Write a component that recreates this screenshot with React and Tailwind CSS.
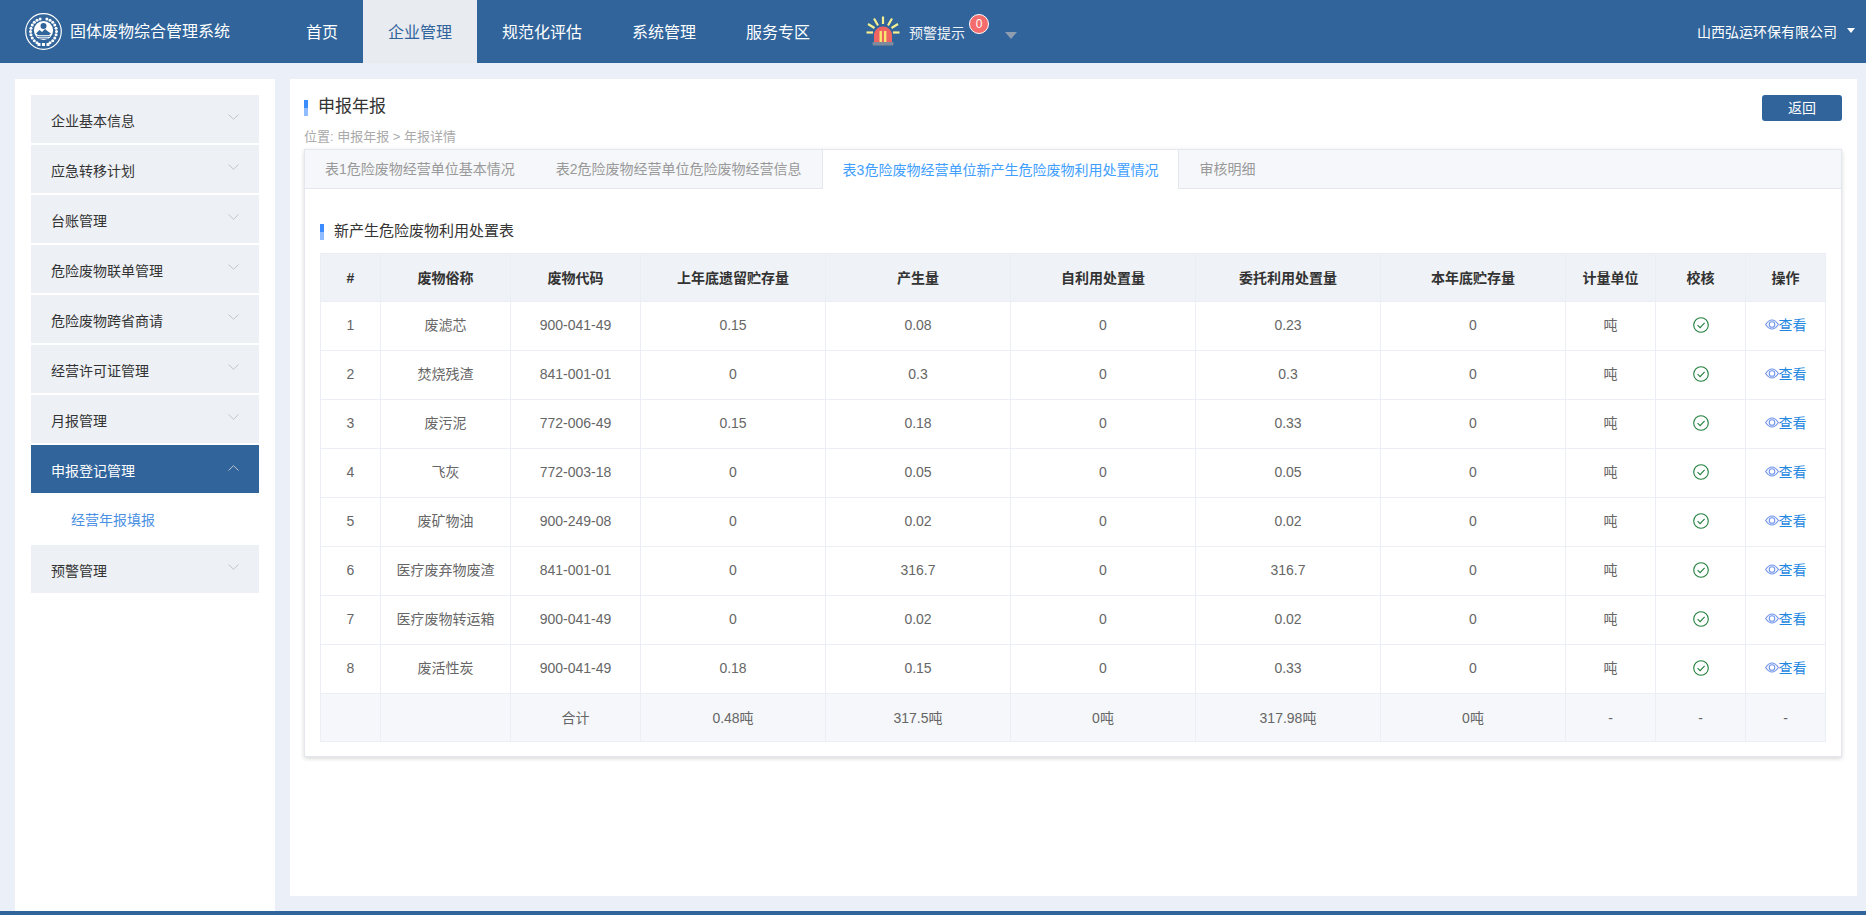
import React from "react";

const FONT = "font-['Liberation_Sans','Noto_Sans_CJK_SC',sans-serif]";

const menu = ["企业基本信息", "应急转移计划", "台账管理", "危险废物联单管理", "危险废物跨省商请", "经营许可证管理", "月报管理"];
const rows = [
  ["1", "废滤芯", "900-041-49", "0.15", "0.08", "0", "0.23", "0"],
  ["2", "焚烧残渣", "841-001-01", "0", "0.3", "0", "0.3", "0"],
  ["3", "废污泥", "772-006-49", "0.15", "0.18", "0", "0.33", "0"],
  ["4", "飞灰", "772-003-18", "0", "0.05", "0", "0.05", "0"],
  ["5", "废矿物油", "900-249-08", "0", "0.02", "0", "0.02", "0"],
  ["6", "医疗废弃物废渣", "841-001-01", "0", "316.7", "0", "316.7", "0"],
  ["7", "医疗废物转运箱", "900-041-49", "0", "0.02", "0", "0.02", "0"],
  ["8", "废活性炭", "900-041-49", "0.18", "0.15", "0", "0.33", "0"],
];
const heads = ["#", "废物俗称", "废物代码", "上年底遗留贮存量", "产生量", "自利用处置量", "委托利用处置量", "本年底贮存量", "计量单位", "校核", "操作"];
const widths = [60, 130, 130, 185, 185, 185, 185, 185, 90, 90, 80];
const totals = ["", "", "合计", "0.48吨", "317.5吨", "0吨", "317.98吨", "0吨", "-", "-", "-"];

function Chevron({ up, className }) {
  return (
    <svg width="11" height="6" viewBox="0 0 11 6" fill="none" stroke="#c0c4cc" strokeWidth="1" className={className}>
      <path d={up ? "M0.5 5.5L5.5 0.7L10.5 5.5" : "M0.5 0.5L5.5 5.3L10.5 0.5"} />
    </svg>
  );
}

function Logo() {
  const dots = [];
  for (let i = 0; i < 24; i++) {
    const a = ((i * 360) / 24 - 90) * (Math.PI / 180);
    if (i === 0 || i === 11 || i === 12 || i === 13) continue;
    dots.push(<circle key={i} cx={18.5 + 13 * Math.cos(a)} cy={18.5 + 13 * Math.sin(a)} r="1.5" fill="#fff" />);
  }
  return (
    <svg width="37" height="37" viewBox="0 0 37 37" className="shrink-0">
      <circle cx="18.5" cy="18.5" r="17.8" fill="#30649b" stroke="#fff" strokeWidth="1.2" />
      {dots}
      <circle cx="18.5" cy="17.5" r="9.6" fill="#fff" />
      <circle cx="18.5" cy="13" r="3" fill="#30649b" />
      <path d="M11 20.5 L14.5 17 L17 19 L20 16 L23 18.5 L26 20.5 L24 22 H13Z" fill="#30649b" />
      <path d="M12 23.3H25M14 25.2H23" stroke="#30649b" strokeWidth="0.9" />
      <rect x="12.5" y="30" width="3" height="3" fill="#fff" />
      <rect x="17" y="30" width="3" height="3" fill="#fff" />
      <rect x="21.5" y="30" width="3" height="3" fill="#fff" />
    </svg>
  );
}

function Alarm() {
  return (
    <svg width="34" height="31" viewBox="0 0 34 31" className="shrink-0">
      <g stroke="#f7f08e" strokeWidth="2.2" strokeLinecap="butt">
        <path d="M17 0.5V8" />
        <path d="M8 2.5L12 9.5" />
        <path d="M26 2.5L22 9.5" />
        <path d="M2 8L8.5 12" />
        <path d="M32 8L25.5 12" />
        <path d="M0.5 16.5H7" />
        <path d="M33.5 16.5H27" />
      </g>
      <path d="M8 26V19a9 8.5 0 0 1 18 0V26Z" fill="#ee6463" />
      <rect x="13.5" y="15" width="2.4" height="11" fill="#f8e66e" />
      <rect x="18" y="15" width="2.4" height="11" fill="#f8e66e" />
      <rect x="6.5" y="26" width="21" height="3.5" rx="1" fill="#7f8a9c" />
    </svg>
  );
}

function Eye() {
  return (
    <svg width="14" height="11" viewBox="0 0 14 11" fill="none" stroke="#6f93e8" strokeWidth="1.1" className="shrink-0">
      <path d="M0.6 5.5C3 2 5 1 7 1s4 1 6.4 4.5C11 9 9 10 7 10S3 9 0.6 5.5Z" />
      <circle cx="7" cy="5.5" r="2.8" />
    </svg>
  );
}

function Check() {
  return (
    <svg width="16" height="16" viewBox="0 0 16 16" fill="none" className="mx-auto block">
      <circle cx="8" cy="8" r="7.3" stroke="#1f7f3c" strokeWidth="1.1" />
      <path d="M4.6 8.2L7.1 10.6L11.6 5.9" stroke="#1f7f3c" strokeWidth="1.1" />
    </svg>
  );
}

function Bar() {
  return <span className="w-1 h-4 shrink-0 bg-gradient-to-b from-[#3b8cff] from-50% to-[#8fbcff] to-50%" />;
}

export default function App() {
  return (
    <div className={"flex flex-col h-[915px] overflow-hidden bg-[#ebf0f8] " + FONT}>
      <header className="flex items-center h-[63px] shrink-0 bg-[#30649b] text-white">
        <div className="flex items-center w-[281px] shrink-0 pl-[25px]">
          <Logo />
          <span className="ml-[8px] text-base">固体废物综合管理系统</span>
        </div>
        <nav className="flex h-full text-base">
          <a className="flex items-center px-[25px] pt-[2px]">首页</a>
          <a className="flex items-center px-[25px] pt-[2px] bg-[#e8ebf0] text-[#30649b]">企业管理</a>
          <a className="flex items-center px-[25px] pt-[2px]">规范化评估</a>
          <a className="flex items-center px-[25px] pt-[2px]">系统管理</a>
          <a className="flex items-center px-[25px] pt-[2px]">服务专区</a>
        </nav>
        <div className="flex items-center ml-[31px] h-full">
          <Alarm />
          <span className="ml-[9px] mt-[3px] text-sm text-[#eef2f7]">预警提示</span>
          <span className="relative -top-[8px] ml-[4px] flex items-center justify-center w-[20px] h-[20px] rounded-full bg-[#f56c6c] border border-white text-xs">0</span>
          <span className="ml-[16px] mt-[8px] w-0 h-0 border-x-[6px] border-x-transparent border-t-[7px] border-t-[#8e9db0]" />
        </div>
        <div className="flex items-center ml-auto pr-[11px]">
          <span className="text-sm">山西弘运环保有限公司</span>
          <span className="ml-[10px] -mt-[2px] w-0 h-0 border-x-[4px] border-x-transparent border-t-[5px] border-t-white" />
        </div>
      </header>

      <div className="flex flex-1 min-h-0 pt-[16px]">
        <aside className="w-[260px] ml-[15px] shrink-0 bg-white px-[16px] pt-[16px] text-sm">
          <div className="flex flex-col gap-[2px]">
            {menu.map((m) => (
              <div key={m} className="flex justify-between h-[48px] bg-[#edf0f5] text-[#333] pl-[20px] pr-[20px]">
                <span className="pt-[16px]">{m}</span>
                <Chevron className="mt-[19px]" />
              </div>
            ))}
            <div className="flex justify-between h-[48px] bg-[#30649b] text-white pl-[20px] pr-[20px]">
              <span className="pt-[16px]">申报登记管理</span>
              <Chevron up className="mt-[20px]" />
            </div>
          </div>
          <div className="flex items-center h-[52px] pl-[40px] pt-[2px] text-[#4a90e2]">经营年报填报</div>
          <div className="flex justify-between h-[48px] bg-[#edf0f5] text-[#333] pl-[20px] pr-[20px]">
            <span className="pt-[16px]">预警管理</span>
            <Chevron className="mt-[19px]" />
          </div>
        </aside>

        <main className="w-[1567px] h-[817px] ml-[15px] shrink-0 bg-white pl-[14px] pr-[15px]">
          <div className="flex items-center justify-between h-[44px] pt-[14px]">
            <div className="flex items-center">
              <Bar />
              <span className="ml-[10px] -mt-[3px] text-[17px] text-[#333]">申报年报</span>
            </div>
            <button className="w-[80px] h-[26px] rounded-[3px] bg-[#30649b] text-white text-sm">返回</button>
          </div>
          <div className="h-[26px] pt-[4px] text-[13px] leading-[20px] text-[#aaa]">位置: 申报年报 &gt; 年报详情</div>

          <section className="w-[1538px] h-[608px] bg-white border border-[#e4e7ed] shadow-[0_2px_4px_rgba(0,0,0,0.12),0_0_6px_rgba(0,0,0,0.04)]">
            <div className="flex h-[39px] bg-[#f5f7fa] border-b border-[#e4e7ed] text-sm text-[#999]">
              <div className="flex items-center pl-[20px] pr-[21px]">表1危险废物经营单位基本情况</div>
              <div className="flex items-center px-[20px]">表2危险废物经营单位危险废物经营信息</div>
              <div className="flex items-center h-[39px] px-[20px] bg-white border-x border-[#e4e7ed] text-[#409eff]">表3危险废物经营单位新产生危险废物利用处置情况</div>
              <div className="flex items-center px-[20px]">审核明细</div>
            </div>

            <div className="px-[15px]">
              <div className="flex items-center h-[64px] pt-[21px]">
                <Bar />
                <span className="ml-[10px] text-[15px] text-[#333]">新产生危险废物利用处置表</span>
              </div>
              <table className="table-fixed border-collapse w-[1505px] text-sm text-[#666] text-center">
                <colgroup>
                  {widths.map((w, i) => (
                    <col key={i} style={{ width: w }} />
                  ))}
                </colgroup>
                <thead>
                  <tr className="h-[48px] bg-[#eff2f6]">
                    {heads.map((h) => (
                      <th key={h} className="border border-[#ebeef5] font-bold text-[#333] p-0">{h}</th>
                    ))}
                  </tr>
                </thead>
                <tbody>
                  {rows.map((r) => (
                    <tr key={r[0]} className="h-[49px]">
                      {r.map((c, i) => (
                        <td key={i} className="border border-[#ebeef5] p-0 pb-[2px]">{c}</td>
                      ))}
                      <td className="border border-[#ebeef5] p-0 pb-[2px]">吨</td>
                      <td className="border border-[#ebeef5] p-0 pb-[2px]"><Check /></td>
                      <td className="border border-[#ebeef5] p-0 pb-[2px]">
                        <span className="inline-flex items-center text-[#1f87e0]"><Eye />查看</span>
                      </td>
                    </tr>
                  ))}
                  <tr className="h-[48px] bg-[#f5f7fa]">
                    {totals.map((c, i) => (
                      <td key={i} className="border border-[#ebeef5] p-0">{c}</td>
                    ))}
                  </tr>
                </tbody>
              </table>
            </div>
          </section>
        </main>
      </div>

      <footer className="h-[4px] shrink-0 bg-[#30649b]" />
    </div>
  );
}
